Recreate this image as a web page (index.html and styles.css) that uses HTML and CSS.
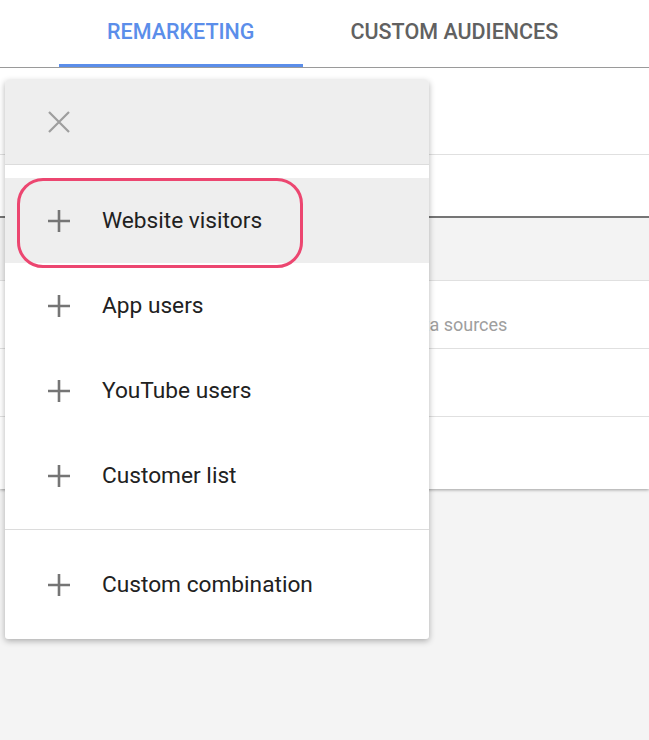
FILE: index.html
```html
<!DOCTYPE html>
<html lang="en">
<head>
    <meta charset="UTF-8">
    <meta name="viewport" content="width=device-width, initial-scale=1.0">
    <title>Audiences</title>
    <link rel="stylesheet" href="styles.css">
</head>
<body>
    <div class="tabs">
        <div class="tab active">Remarketing</div>
        <div class="tab">Custom audiences</div>
    </div>

    <div class="panel">
        <div class="row row-top"></div>
        <div class="row row-search"></div>
        <div class="row row-head"></div>
        <div class="row row-text"><span class="hint">Combined list from your data sources</span></div>
        <div class="row"></div>
        <div class="row row-last"></div>
    </div>

    <div class="menu">
        <div class="menu-header">
            <svg class="close-icon" viewBox="0 0 22 22">
                <path d="M1 1L21 21M21 1L1 21" />
            </svg>
        </div>

        <div class="menu-group first">
            <div class="menu-item selected">
                <svg class="plus-icon" viewBox="0 0 22 22"><path d="M11 0V22M0 11H22" /></svg>
                <span>Website visitors</span>
            </div>
            <div class="menu-item">
                <svg class="plus-icon" viewBox="0 0 22 22"><path d="M11 0V22M0 11H22" /></svg>
                <span>App users</span>
            </div>
            <div class="menu-item">
                <svg class="plus-icon" viewBox="0 0 22 22"><path d="M11 0V22M0 11H22" /></svg>
                <span>YouTube users</span>
            </div>
            <div class="menu-item">
                <svg class="plus-icon" viewBox="0 0 22 22"><path d="M11 0V22M0 11H22" /></svg>
                <span>Customer list</span>
            </div>
        </div>

        <div class="menu-group last">
            <div class="menu-item">
                <svg class="plus-icon" viewBox="0 0 22 22"><path d="M11 0V22M0 11H22" /></svg>
                <span>Custom combination</span>
            </div>
        </div>

        <div class="highlight"></div>
    </div>
</body>
</html>
```

FILE: styles.css
```css
body {
    font-family: Roboto, "Liberation Sans", sans-serif;
    margin: 0;
    padding: 0;
    min-height: 740px;
    background-color: #f4f4f4;
    position: relative;
}

.tabs {
    display: flex;
    height: 67px;
    padding-left: 59px;
    background-color: white;
    border-bottom: 1px solid #9a9a9a;
    position: relative;
    z-index: 1;
}

.tab {
    display: flex;
    align-items: center;
    justify-content: center;
    padding: 0 48px 2px;
    box-sizing: border-box;
    border-bottom: 3px solid transparent;
    font-size: 21.5px;
    font-weight: 500;
    text-transform: uppercase;
    color: #616161;
}

.tab.active {
    color: #5b8eea;
    border-bottom-color: #5b8eea;
}

.panel {
    background-color: white;
    box-shadow: 0 1px 3px rgba(0, 0, 0, 0.35);
}

.row {
    height: 68px;
    border-bottom: 1px solid #e0e0e0;
    box-sizing: border-box;
}

.row-top {
    height: 87px;
}

.row-search {
    height: 63px;
    border-bottom: 2px solid #757575;
}

.row-head {
    height: 63px;
    background-color: #f3f3f3;
}

.row-text {
    display: flex;
    align-items: flex-end;
    padding: 0 0 13px 207px;
}

.hint {
    font-size: 18px;
    color: #9e9e9e;
}

.row-last {
    height: 72px;
    border-bottom: none;
}

.menu {
    position: absolute;
    top: 80px;
    left: 5px;
    width: 424px;
    background-color: white;
    border-radius: 3px;
    box-shadow: 0 2px 6px rgba(0, 0, 0, 0.3);
    z-index: 2;
}

.menu-header {
    height: 84px;
    display: flex;
    align-items: center;
    padding-left: 43px;
    background-color: #eeeeee;
    border-bottom: 1px solid #dcdcdc;
    border-radius: 3px 3px 0 0;
}

.close-icon {
    width: 22px;
    height: 22px;
    stroke: #9e9e9e;
    stroke-width: 2.2;
    fill: none;
}

.menu-group.first {
    padding: 13px 0 11px;
    border-bottom: 1px solid #dcdcdc;
}

.menu-group.last {
    padding: 12px 0;
}

.menu-item {
    height: 85px;
    display: flex;
    align-items: center;
    padding-left: 43px;
    font-size: 22.7px;
    color: #212121;
}

.menu-item.selected {
    background-color: #eeeeee;
}

.plus-icon {
    width: 22px;
    height: 22px;
    margin-right: 32px;
    stroke: #757575;
    stroke-width: 2.6;
    fill: none;
}

.highlight {
    position: absolute;
    top: 98px;
    left: 12px;
    width: 286px;
    height: 90px;
    box-sizing: border-box;
    border: 3px solid #ec4670;
    border-radius: 26px;
}
```
